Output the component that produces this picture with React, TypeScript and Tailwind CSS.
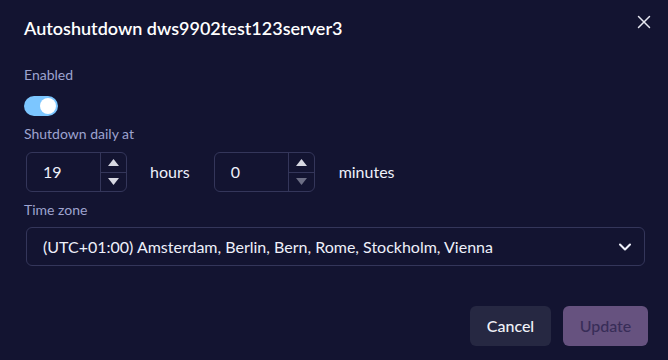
import { X, ChevronDown } from "lucide-react";

function Stepper({ value, downDim }: { value: string; downDim?: boolean }) {
  return (
    <div className="flex h-[40px] w-[101px] rounded-md border border-[#34365a]">
      <div className="flex flex-1 items-center pl-[16px] text-[16px] text-[#eef0fa]">{value}</div>
      <div className="flex w-[26px] flex-col border-l border-[#34365a]">
        <div className="flex flex-1 items-center justify-center border-b border-[#34365a]">
          <svg width="11" height="7" viewBox="0 0 11 7">
            <path d="M5.5 0 L11 7 L0 7 Z" fill="#d7d8e2" />
          </svg>
        </div>
        <div className="flex flex-1 items-center justify-center">
          <svg width="11" height="7" viewBox="0 0 11 7">
            <path d="M0 0 L11 0 L5.5 7 Z" fill={downDim ? "#6c6e84" : "#d7d8e2"} />
          </svg>
        </div>
      </div>
    </div>
  );
}

export default function App() {
  return (
    <div
      className="h-[360px] w-[668px] bg-[#131431] pt-[17px] text-white"
      style={{ fontFamily: "Lato, 'Noto Sans', sans-serif" }}
    >
      <div className="flex h-[22px] items-center justify-between pl-[24px] pr-[13px]">
        <h1 className="text-[18px] font-semibold leading-[22px]">
          Autoshutdown dws9902test123server3
        </h1>
        <X size={22} strokeWidth={1.6} className="-mt-[12px] text-[#e6e7f0]" />
      </div>

      <div className="px-[24px] pt-[28px]">
        <div className="text-[14px] leading-[16px] text-[#9ea3cf]">Enabled</div>
        <div className="mt-[13px] flex h-[20px] w-[34px] items-center justify-end rounded-full bg-[#7cc6ff] pr-[2px]">
          <div className="h-[16px] w-[16px] rounded-full bg-white" />
        </div>

        <div className="mt-[10px] text-[14px] leading-[16px] text-[#9ea3cf]">Shutdown daily at</div>
        <div className="mt-[10px] flex items-center pl-[2px]">
          <Stepper value="19" />
          <span className="ml-[23px] text-[16px] text-[#eef0fa]">hours</span>
          <div className="ml-[24px]">
            <Stepper value="0" downDim />
          </div>
          <span className="ml-[24px] text-[16px] text-[#eef0fa]">minutes</span>
        </div>

        <div className="mt-[10px] text-[14px] leading-[16px] text-[#9ea3cf]">Time zone</div>
        <div className="ml-[2px] mt-[9px] flex h-[39px] w-[619px] items-center justify-between rounded-md border border-[#34365a] pl-[16px] pr-[9px]">
          <span className="text-[16px] text-[#eef0fa]">
            (UTC+01:00) Amsterdam, Berlin, Bern, Rome, Stockholm, Vienna
          </span>
          <ChevronDown size={20} strokeWidth={2.5} className="text-[#eef0fa]" />
        </div>
      </div>

      <div className="mt-[40px] flex justify-end gap-[12px] pr-[20px]">
        <button className="h-[40px] w-[81px] rounded-md bg-[#262842] text-[16px] font-medium text-[#f0f1f8]">
          Cancel
        </button>
        <button className="h-[40px] w-[85px] rounded-md bg-[#66527f] text-[16px] font-medium text-[#382d58]">
          Update
        </button>
      </div>
    </div>
  );
}
